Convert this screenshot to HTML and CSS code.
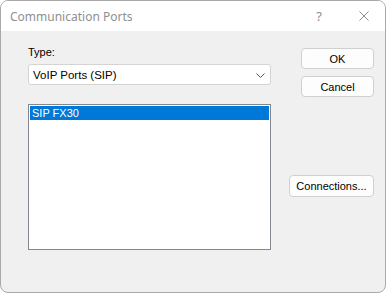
FILE: index.html
```html
<!DOCTYPE html>
<html>
<head>
    <meta charset="UTF-8">
    <title>Communication Ports</title>
    <link rel="stylesheet" href="styles.css">
</head>
<body>
    <div class="window">
        <!-- Title bar -->
        <div class="title-bar">
            <span class="title">Communication Ports</span>
            <span class="help">?</span>
            <svg class="close" width="10" height="10" viewBox="0 0 10 10">
                <path d="M0.5 0.5 L9.5 9.5 M9.5 0.5 L0.5 9.5" stroke="#8c8c8c" stroke-width="1" fill="none"/>
            </svg>
        </div>
        <div class="client">
            <div class="form-col">
                <div class="field-label">Type:</div>
                <div class="combo">
                    <span>VoIP Ports (SIP)</span>
                    <svg class="chevron" width="9" height="5" viewBox="0 0 9 5">
                        <path d="M0.5 0.5 L4.5 4.5 L8.5 0.5" stroke="#555" stroke-width="1" fill="none"/>
                    </svg>
                </div>
                <div class="listbox">
                    <div class="list-item selected">SIP FX30</div>
                </div>
            </div>
            <div class="button-col">
                <button class="dlg-button ok">OK</button>
                <button class="dlg-button cancel">Cancel</button>
                <button class="dlg-button connections">Connections...</button>
            </div>
        </div>
    </div>
</body>
</html>
```

FILE: styles.css
```css
body {
    margin: 0;
    background-color: #fff;
    font-family: "Liberation Sans", Arial, sans-serif;
}
.window {
    width: 386px;
    height: 293px;
    box-sizing: border-box;
    border: 1px solid #a9a9a9;
    border-radius: 8px;
    overflow: hidden;
    background-color: #f0f0f0;
    display: flex;
    flex-direction: column;
}
.title-bar {
    height: 30px;
    background-color: #fff;
    display: flex;
    align-items: center;
    padding-left: 9px;
    flex-shrink: 0;
}
.title {
    font-family: "Noto Sans", sans-serif;
    font-size: 12px;
    color: #8f8f8f;
    flex: 1;
}
.help {
    font-family: "Noto Sans", sans-serif;
    font-size: 13px;
    color: #8c8c8c;
    margin-right: 37px;
}
.close {
    margin-right: 16px;
}
.client {
    display: flex;
    justify-content: space-between;
    padding: 14px 11px 0 27px;
}
.form-col {
    width: 243px;
}
.field-label {
    font-size: 11px;
    line-height: 14px;
    color: #000;
}
.combo {
    margin-top: 5px;
    height: 21px;
    box-sizing: border-box;
    background-color: #fff;
    border: 1px solid #d4d4d4;
    border-radius: 3px;
    display: flex;
    align-items: center;
    justify-content: space-between;
    padding: 0 5px 0 4px;
    font-size: 11.5px;
    color: #000;
}
.chevron {
    margin-top: 1px;
}
.listbox {
    margin-top: 19px;
    height: 146px;
    box-sizing: border-box;
    background-color: #fff;
    border: 1px solid #828790;
    padding: 1px;
}
.list-item {
    font-size: 11px;
    line-height: 14px;
    padding-left: 2px;
}
.list-item.selected {
    background-color: #0078d7;
    color: #fff;
}
.button-col {
    display: flex;
    flex-direction: column;
    align-items: flex-end;
    padding-top: 3px;
}
.dlg-button {
    font-family: "Liberation Sans", Arial, sans-serif;
    font-size: 11px;
    color: #000;
    background-color: #fdfdfd;
    border: 1px solid #d0d0d0;
    border-radius: 4px;
    height: 21px;
    padding: 0;
}
.ok {
    width: 73px;
}
.cancel {
    width: 73px;
    margin-top: 7px;
}
.connections {
    width: 85px;
    height: 22px;
    margin-top: 78px;
}
```
